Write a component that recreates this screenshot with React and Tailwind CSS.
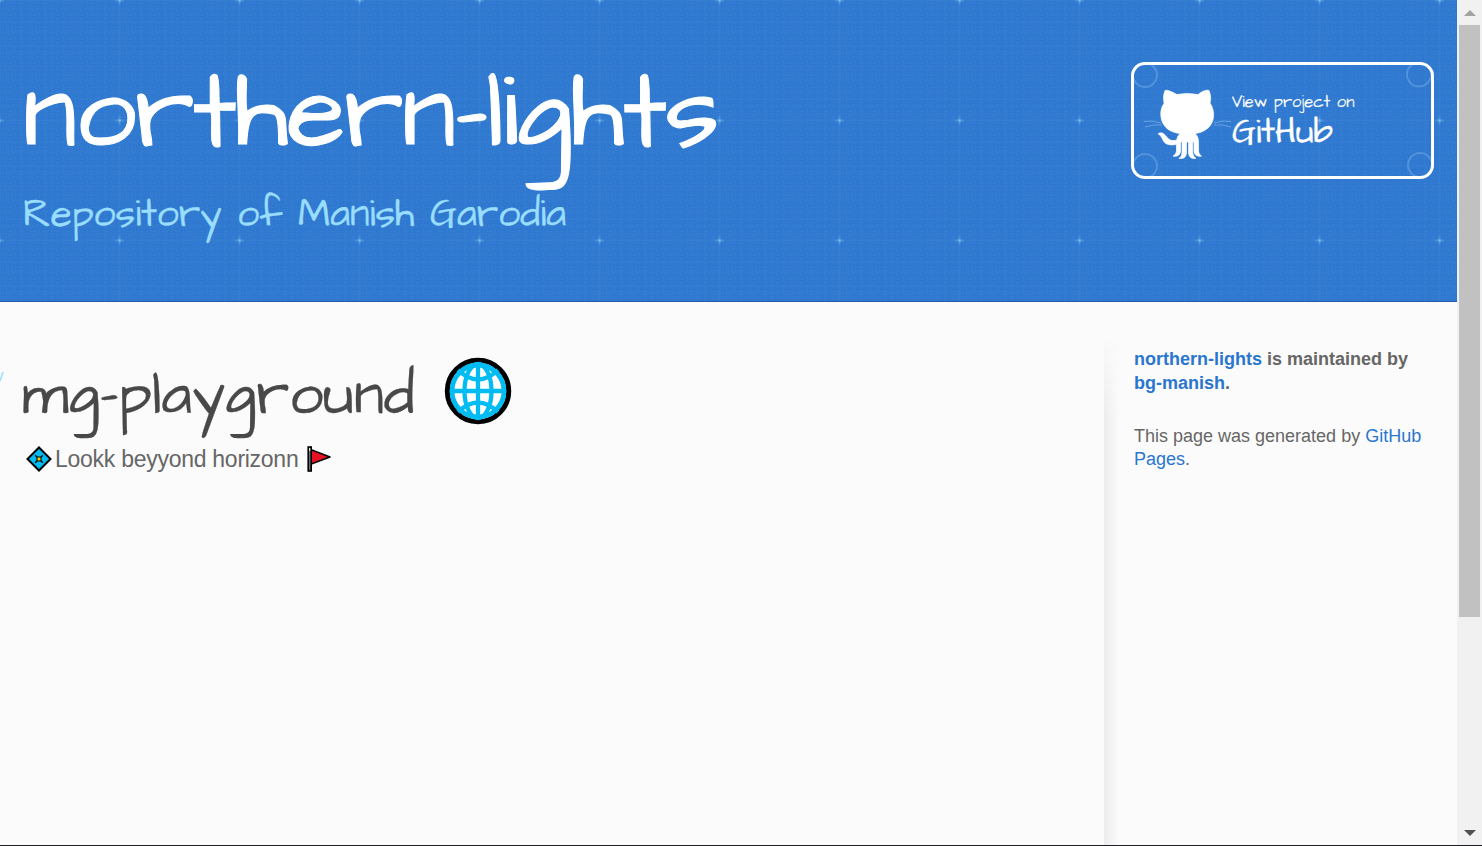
import React from "react";

function Blueprint() {
  const fine = [6, 13, 19, 31, 38, 46, 54, 67, 73, 82, 91, 97, 106, 113];
  return (
    <svg className="absolute inset-0 h-full w-full" aria-hidden="true">
      <defs>
        <pattern id="weave" width="12" height="12" patternUnits="userSpaceOnUse">
          <path d="M1.5 0v6M4.5 0v6M7.5 6v6M10.5 6v6M6 1.5h6M6 4.5h6M0 7.5h6M0 10.5h6" stroke="#205fb8" strokeOpacity="0.07" />
          <path d="M3.5 1v5M9.5 6v5M7 3.5h5M1 9.5h5" stroke="#5aa5ee" strokeOpacity="0.08" />
        </pattern>
        <pattern id="grid" x="59.5" y="60.5" width="120" height="120" patternUnits="userSpaceOnUse">
          {fine.map((n) => (
            <path key={n} d={`M${n} 0v120M0 ${n}h120`} stroke="#4f9be6" strokeOpacity="0.1" />
          ))}
          <path d="M60 0v120M0 60h120" stroke="#66b0ec" strokeOpacity="0.18" />
          <path d="M60 55.500v9M55.500 60h9" stroke="#8ccbed" strokeOpacity="0.45" />
          <path d="M60 58l.7 1.300 1.300.7-1.300.7-.7 1.300-.7-1.300-1.300-.7 1.300-.7z" fill="#8ccbed" fillOpacity="0.7" />
        </pattern>
      </defs>
      <rect width="100%" height="100%" fill="url(#weave)" />
      <rect width="100%" height="100%" fill="url(#grid)" />
    </svg>
  );
}

function Octocat() {
  return (
    <svg className="h-[76px] w-[92px] shrink-0" viewBox="0 0 92 76" fill="none" aria-hidden="true">
      <path d="M2 35.5q8-1.500 17 1.500M3 41q8-3 17-2M72 37q9-3 17-1.500M72 39q9-1 17 2" stroke="#9fcdf2" strokeOpacity="0.5" strokeWidth="1" />
      <path d="M23 4.500C25.500 3.500 31 6.500 35 8.500Q45 6.500 56 8.500C60 5 65 3.500 67 4.500C69 9 69 14 68 17C74 26 72 37 66 42C62 45.500 57 47 53 47.500C56 50 56.500 53 56.500 57V65Q56.500 68 59.500 70.200Q53 71 52 66V57.500Q52 55.500 50.700 55.500V67Q51 70.500 54 72.400Q47 73.400 46.500 67V56H44.500V67Q44 73.400 37 72.400Q40 70.500 40 67V55.500Q38.500 55.500 38.500 57.500V66Q37.500 71 31 70.200Q34.500 68 34.500 65V58.500C25 60 22 57 20.500 53C19 50 17.500 48.500 16 47.800Q20 45.200 23.500 49.500C27 54 29 55.500 34.700 54Q35 50 38 47.500C33 47 27 45 23.500 41C18 35 17 24 22 17.500Q20.500 9 23 4.500Z" fill="#fff" stroke="#fff" strokeWidth="0.700" />
    </svg>
  );
}

function GitHubButton() {
  return (
    <a className="relative mt-px flex h-[117px] w-[303px] overflow-hidden rounded-[14px] border-3 border-white pt-[21px] pl-2 text-white">
      <svg className="absolute inset-0" width="297" height="111" fill="none" stroke="#8bc2f2" strokeOpacity="0.36" strokeWidth="2" aria-hidden="true">
        <circle cx="11" cy="10" r="12" />
        <circle cx="285" cy="9.500" r="12" />
        <circle cx="11" cy="101" r="12" />
        <circle cx="286" cy="100" r="12" />
      </svg>
      <Octocat />
      <span className="-ml-[2px] flex flex-col pt-[5px] font-['Architects_Daughter','Lato',sans-serif]">
        <span className="text-[16.5px] leading-6 whitespace-nowrap [-webkit-text-stroke:0.1px]">View project on</span>
        <span className="text-[34.5px] leading-[35px] [-webkit-text-stroke:0.3px]">GitHub</span>
      </span>
    </a>
  );
}

function Globe() {
  return (
    <svg className="h-[68px] w-[68px]" viewBox="0 0 68 68" fill="none" aria-hidden="true">
      <circle cx="34" cy="34" r="30.700" fill="#fff" stroke="#000" strokeWidth="5" />
      <circle cx="34" cy="34" r="26" stroke="#00bcf2" strokeWidth="4.800" />
      <ellipse cx="34" cy="34" rx="13.500" ry="27" stroke="#00bcf2" strokeWidth="4.300" />
      <path d="M34 6v56M8 34h52M14 13q20 19 40 0M14 55q20-19 40 0" stroke="#00bcf2" strokeWidth="4.300" />
    </svg>
  );
}

function Diamond() {
  return (
    <svg className="h-[26px] w-[26px]" viewBox="0 0 26 26" aria-hidden="true">
      <path d="M13 1.500L24.500 13 13 24.500 1.500 13z" fill="#00bcf2" stroke="#000" strokeWidth="2" />
      <path d="M9.200 9.200l7.600 7.600M16.800 9.200l-7.600 7.600" stroke="#000" strokeWidth="1.300" />
      <rect x="11" y="11" width="4" height="4" rx="1" fill="#ffc800" stroke="#000" strokeWidth="1" />
    </svg>
  );
}

function Flag() {
  return (
    <svg className="h-[26px] w-[26px]" viewBox="0 0 26 26" aria-hidden="true">
      <path d="M4.500 3.500L24 11 4.500 18.200z" fill="#e81224" stroke="#000" strokeWidth="1.500" strokeLinejoin="round" />
      <rect x="2.200" y="1" width="3" height="24" fill="#68717b" stroke="#000" strokeWidth="1.600" />
      <path d="M3.200 2h1v3h-1z" fill="#fff" />
    </svg>
  );
}

export default function App() {
  return (
    <div className="flex h-[846px] w-[1482px] overflow-hidden border-b border-[#202124] bg-[#fbfbfb] font-['Liberation_Sans',Arial,sans-serif] text-[#666]">
      <div className="flex min-w-0 flex-1 flex-col">
        <header className="relative h-[302px] shrink-0 border-b border-[#2558a6] bg-[#3079d0]">
          <Blueprint />
          <div className="relative flex justify-between pt-[61px] pr-[23px] pl-[23px] font-['Architects_Daughter','Lato',sans-serif]">
            <div className="flex flex-col">
              <h1 className="h-[127px] text-[108px] leading-[106px] tracking-[-1.5px] whitespace-nowrap text-white [-webkit-text-stroke:1px]">northern-lights</h1>
              <h2 className="text-[39px] leading-[54px] whitespace-nowrap text-[#99ddff] [-webkit-text-stroke:0.3px]">Repository of Manish Garodia</h2>
            </div>
            <GitHubButton />
          </div>
        </header>
        <div className="flex flex-1">
          <main className="relative w-[1104px] pt-[55px] pl-[23px]">
            <svg className="absolute top-[69px] left-0" width="4" height="12" aria-hidden="true">
              <path d="M0 10L3 1" stroke="#99ddff" strokeWidth="1.500" />
            </svg>
            <div className="flex h-[86px] items-start">
              <h1 className="-ml-px w-[422px] font-['Architects_Daughter','Lato',sans-serif] text-[60px] leading-[77px] tracking-[0.1px] whitespace-nowrap text-[#484848] [-webkit-text-stroke:0.3px]">mg-playground</h1>
              <Globe />
            </div>
            <p className="flex h-8 items-center pl-[3px] text-[23px] tracking-[-0.27px] whitespace-nowrap">
              <Diamond />
              <span className="ml-[3px] w-[251px]">Lookk beyyond horizonn</span>
              <Flag />
            </p>
          </main>
          <aside className="flex flex-1">
            <div className="mt-9 w-[15px] bg-linear-to-r from-[#ececec] to-[#fbfbfb] mask-t-from-[430px] mask-t-to-[508px]" />
            <div className="pt-[46px] pl-[15px] text-[18px] leading-[23.5px] whitespace-nowrap">
              <p className="mb-[30px] font-bold">
                <a className="text-[#2a76cf]">northern-lights</a> is maintained by<br />
                <a className="text-[#2a76cf]">bg-manish</a>.
              </p>
              <p className="leading-[23px]">
                This page was generated by <a className="text-[#2a76cf]">GitHub<br />Pages</a>.
              </p>
            </div>
          </aside>
        </div>
      </div>
      <div className="flex w-[25px] flex-col items-center bg-[#f1f1f1]">
        <div className="flex h-[25px] items-center">
          <svg width="12" height="7" aria-hidden="true"><path d="M0 7L6 1 12 7z" fill="#a3a3a3" /></svg>
        </div>
        <div className="h-[592px] w-[21px] bg-[#c1c1c1]" />
        <div className="flex flex-1 items-end pb-2">
          <svg width="12" height="7" aria-hidden="true"><path d="M0 0H12L6 6z" fill="#505050" /></svg>
        </div>
      </div>
    </div>
  );
}
